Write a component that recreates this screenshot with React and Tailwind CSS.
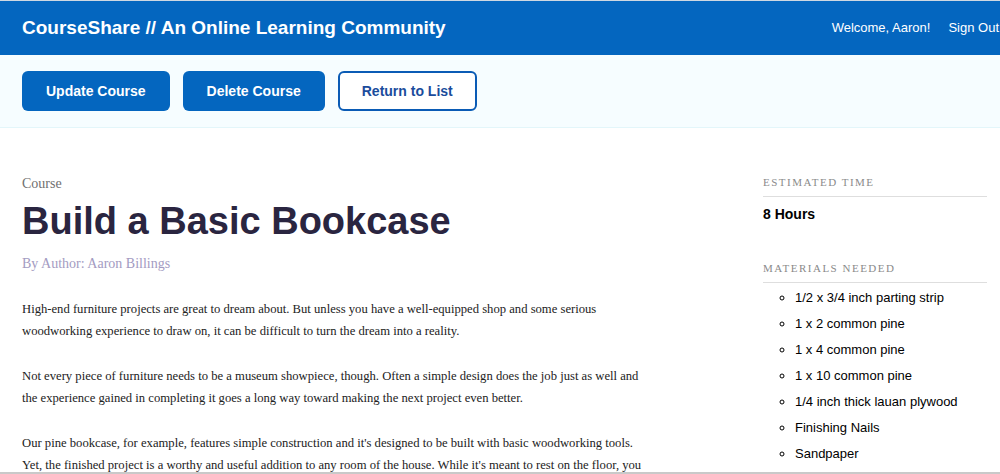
import { useState } from 'react';

const materials = [
  '1/2 x 3/4 inch parting strip',
  '1 x 2 common pine',
  '1 x 4 common pine',
  '1 x 10 common pine',
  '1/4 inch thick lauan plywood',
  'Finishing Nails',
  'Sandpaper',
];

const paragraphs = [
  'High-end furniture projects are great to dream about. But unless you have a well-equipped shop and some serious woodworking experience to draw on, it can be difficult to turn the dream into a reality.',
  'Not every piece of furniture needs to be a museum showpiece, though. Often a simple design does the job just as well and the experience gained in completing it goes a long way toward making the next project even better.',
  "Our pine bookcase, for example, features simple construction and it's designed to be built with basic woodworking tools. Yet, the finished project is a worthy and useful addition to any room of the house. While it's meant to rest on the floor, you can also hang it on the wall if you prefer.",
];

export default function App() {
  const [user] = useState('Aaron');

  return (
    <div className="h-[474px] overflow-hidden border-b-2 border-[#c9c9c9] bg-white font-['Liberation_Sans',Arial,sans-serif]">
      <header className="flex h-[55px] items-center justify-between border-t border-[#cfd8e2] bg-[#0466bf] pl-[22px] pr-[1px] text-white">
        <h1 className="text-[19px] font-bold">CourseShare // An Online Learning Community</h1>
        <nav className="flex items-center gap-[18px] text-[13px]">
          <span>Welcome, {user}!</span>
          <a href="#">Sign Out</a>
        </nav>
      </header>

      <div className="flex gap-[13px] border-b border-[#e3f6fa] bg-[#f6fdff] px-[22px] py-4">
        <ActionButton>Update Course</ActionButton>
        <ActionButton>Delete Course</ActionButton>
        <ActionButton outline>Return to List</ActionButton>
      </div>

      <div className="flex justify-between pl-[22px] pr-[13px]">
        <main className="w-[630px] pt-[46px]">
          <p className="font-['Liberation_Serif',serif] text-[14px] leading-5 text-[#707070]">Course</p>
          <h2 className="mt-1 text-[38px] leading-[46px] font-bold text-[#2a2540]">Build a Basic Bookcase</h2>
          <p className="mt-[10px] font-['Liberation_Serif',serif] text-[14px] leading-5 text-[#a39bc2]">
            By Author: Aaron Billings
          </p>
          <div className="mt-6 flex flex-col gap-[23px] font-['Liberation_Serif',serif] text-[12.65px] leading-[22px] text-[#222]">
            {paragraphs.map((text) => (
              <p key={text.slice(0, 12)}>{text}</p>
            ))}
          </div>
        </main>

        <aside className="w-[224px] pt-[46px]">
          <SideHeading>Estimated Time</SideHeading>
          <p className="mt-[7px] text-[14px] leading-5 font-bold text-black">8 Hours</p>

          <div className="mt-9">
            <SideHeading>Materials Needed</SideHeading>
            <ul className="mt-[2px] list-[circle] pl-8 text-[13px] leading-[26px] text-black">
              {materials.map((item) => (
                <li key={item}>{item}</li>
              ))}
            </ul>
          </div>
        </aside>
      </div>
    </div>
  );
}

function ActionButton({ children, outline }) {
  return (
    <button
      type="button"
      className={
        outline
          ? 'h-10 rounded-md border-2 border-[#0a5bb5] bg-white px-[22px] text-[14px] font-bold text-[#1a4c9c]'
          : 'h-10 rounded-md bg-[#0466bf] px-6 text-[14px] font-bold text-white'
      }
    >
      {children}
    </button>
  );
}

function SideHeading({ children }) {
  return (
    <h3 className="border-b border-[#dedede] pb-[6px] font-['Liberation_Serif',serif] text-[11px] leading-4 tracking-[1.5px] text-[#8a8a8a] uppercase">
      {children}
    </h3>
  );
}
